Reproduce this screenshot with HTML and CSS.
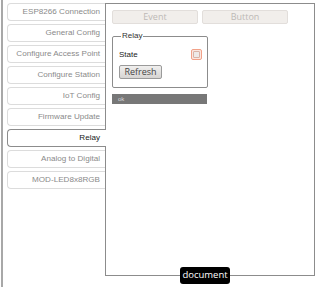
FILE: index.html
```html
<!DOCTYPE html>
<html>
<head>
<meta charset="utf-8">
<link rel="stylesheet" href="styles.css">
</head>
<body>
<div class="page">
  <nav class="tabs">
    <div class="tab">ESP8266 Connection</div>
    <div class="tab">General Config</div>
    <div class="tab">Configure Access Point</div>
    <div class="tab">Configure Station</div>
    <div class="tab">IoT Config</div>
    <div class="tab">Firmware Update</div>
    <div class="tab active">Relay</div>
    <div class="tab">Analog to Digital</div>
    <div class="tab">MOD-LED8x8RGB</div>
  </nav>
  <main class="panel">
    <div class="toolbar">
      <div class="btn-disabled">Event</div>
      <div class="btn-disabled">Button</div>
    </div>
    <fieldset class="box">
      <legend class="legend">Relay</legend>
      <div class="row">
        <span class="label">State</span>
        <span class="check"><span class="check-inner"></span></span>
      </div>
      <div class="btn">Refresh</div>
    </fieldset>
    <div class="status">ok</div>
  </main>
  <div class="tooltip">document</div>
</div>
</body>
</html>
```
FILE: styles.css
```css
html, body {
  margin: 0;
  padding: 0;
  background: #fff;
}
.page {
  position: relative;
  display: flex;
  align-items: flex-start;
  width: 320px;
  height: 287px;
  box-sizing: border-box;
  margin-left: 1px;
  border-left: 2px solid #a8a8a8;
  padding-top: 3px;
  font-family: "Liberation Sans", Arial, sans-serif;
}
.tabs {
  display: flex;
  flex-direction: column;
  gap: 3px;
  margin-left: 4px;
  width: 98px;
  position: relative;
  z-index: 2;
}
.tab {
  height: 18px;
  box-sizing: border-box;
  border: 1px solid #dcdcdc;
  border-right: none;
  border-radius: 4px 0 0 4px;
  background: #fff;
  color: #8a8a8a;
  font-size: 8.1px;
  line-height: 16px;
  text-align: right;
  padding-right: 5px;
  white-space: nowrap;
}
.tab.active {
  border-color: #8c8c8c;
  color: #1a1a1a;
  margin-right: -1px;
  padding-right: 6px;
}
.panel {
  width: 210px;
  height: 273px;
  box-sizing: border-box;
  border: 1px solid #8c8c8c;
  padding: 6px 6px;
  display: flex;
  flex-direction: column;
  align-items: flex-start;
}
.toolbar {
  display: flex;
  gap: 4px;
}
.btn-disabled {
  width: 86px;
  height: 14px;
  box-sizing: border-box;
  background: #f1eeeb;
  border: 1px solid #e2dedb;
  border-radius: 2px;
  color: #bdb9b6;
  font-family: "Open Sans", sans-serif;
  font-size: 9px;
  line-height: 12px;
  text-align: center;
}
.box {
  margin: 8px 0 0 0;
  width: 96px;
  height: 56px;
  box-sizing: border-box;
  border: 1px solid #8c8c8c;
  border-radius: 2px;
  padding: 6px 6px 0 6px;
  min-width: 0;
}
.legend {
  padding: 0 1px;
  margin-left: 2px;
  font-size: 8px;
  line-height: 8px;
  color: #333;
}
.row {
  display: flex;
  align-items: center;
  justify-content: space-between;
  height: 12px;
  margin-top: 2px;
}
.label {
  font-size: 8px;
  color: #222;
}
.check {
  width: 11px;
  height: 11px;
  box-sizing: border-box;
  border: 1px solid #f2a188;
  border-radius: 2px;
  background: #fbe7e0;
  padding: 1px;
  margin-right: -1px;
}
.check-inner {
  display: block;
  width: 100%;
  height: 100%;
  box-sizing: border-box;
  border: 1px solid #d9b3a6;
  border-radius: 1px;
  background: #eeeae8;
}
.btn {
  margin-top: 5px;
  width: 43px;
  height: 14px;
  box-sizing: border-box;
  border: 1px solid #9a9a9a;
  border-radius: 2px;
  background: linear-gradient(#f0efee, #d6d4d2);
  color: #444;
  font-family: "Open Sans", sans-serif;
  font-size: 9px;
  line-height: 12px;
  text-align: center;
}
.status {
  margin-top: 6px;
  width: 95px;
  height: 10px;
  box-sizing: border-box;
  background: #777;
  color: #d8d8d8;
  font-size: 6px;
  line-height: 10px;
  padding-left: 6px;
}
.tooltip {
  position: absolute;
  left: 177px;
  top: 267px;
  width: 50px;
  height: 17px;
  box-sizing: border-box;
  background: #000;
  color: #fff;
  border-radius: 3px;
  font-family: "Open Sans", sans-serif;
  font-size: 9.5px;
  line-height: 16px;
  text-align: center;
  z-index: 3;
}
```
